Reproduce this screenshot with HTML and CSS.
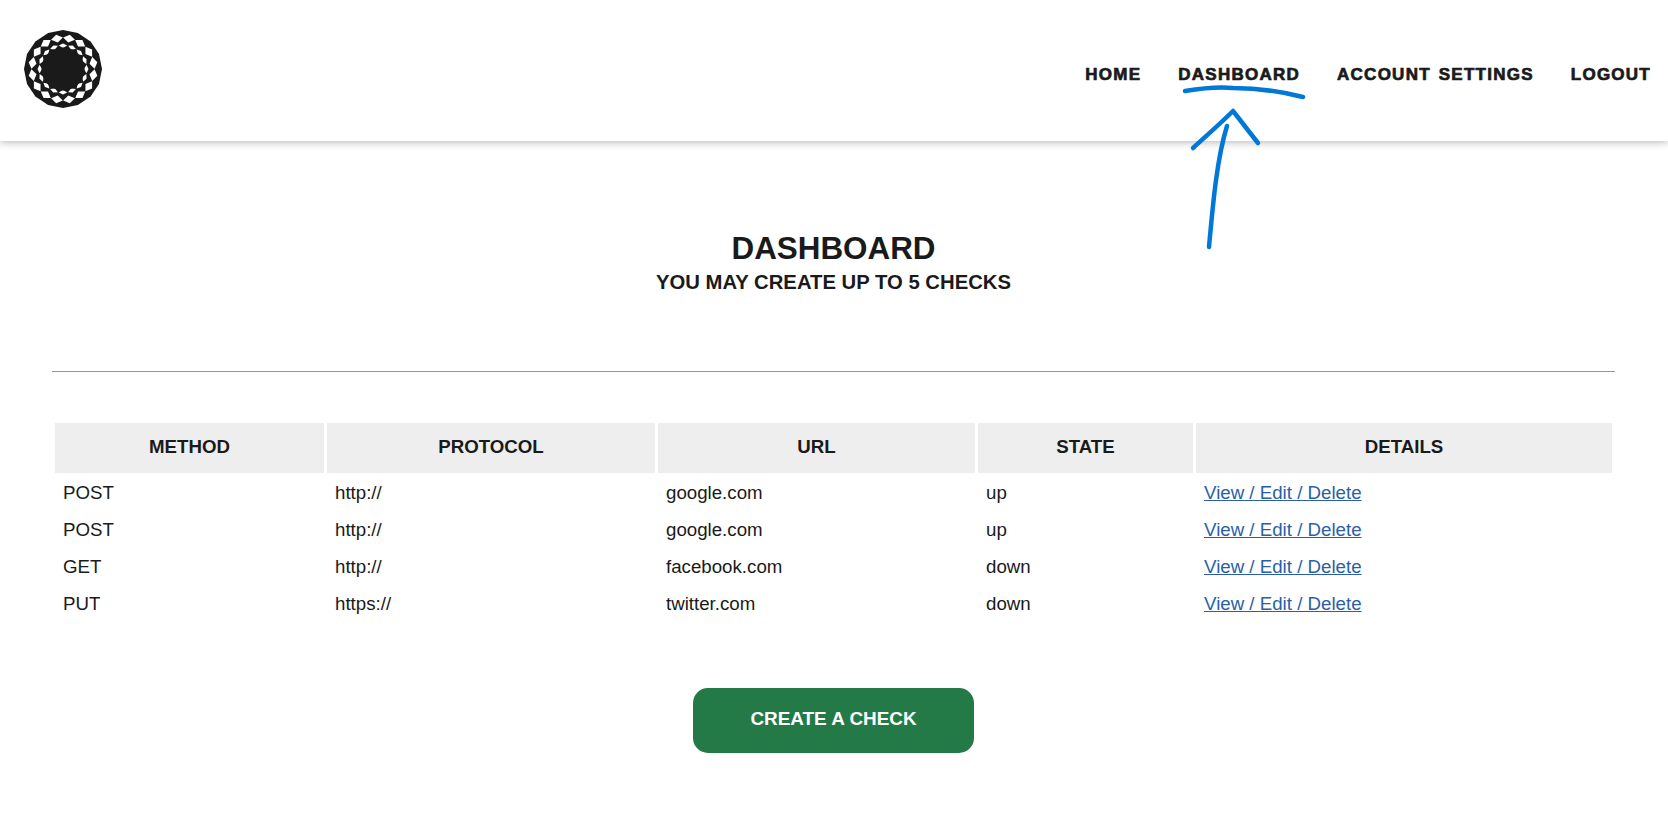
FILE: index.html
```html
<!DOCTYPE html>
<html lang="en">

<head>
  <meta charset="UTF-8">
  <meta name="viewport" content="width=device-width, initial-scale=1.0">
  <title>Dashboard</title>
  <link rel="stylesheet" href="styles.css">
</head>

<body>
  <header class="header">
    <a class="logo" href="#">
      <svg width="78" height="78" viewBox="-39 -39 78 78">
        <defs>
          <polygon id="outer" points="0,-35 6,-31 0,-27 -6,-31" fill="#fff" />
          <polygon id="inner" points="0,-25.5 4.2,-23.5 0,-21 -4.2,-23.5" fill="#fff" />
        </defs>
        <polygon fill="#1a1a1a" points="0,-39 14.9,-36 27.6,-27.6 36,-14.9 39,0 36,14.9 27.6,27.6 14.9,36 0,39 -14.9,36 -27.6,27.6 -36,14.9 -39,0 -36,-14.9 -27.6,-27.6 -14.9,-36" />
        <use href="#outer" transform="rotate(11.25)" />
        <use href="#outer" transform="rotate(33.75)" />
        <use href="#outer" transform="rotate(56.25)" />
        <use href="#outer" transform="rotate(78.75)" />
        <use href="#outer" transform="rotate(101.25)" />
        <use href="#outer" transform="rotate(123.75)" />
        <use href="#outer" transform="rotate(146.25)" />
        <use href="#outer" transform="rotate(168.75)" />
        <use href="#outer" transform="rotate(191.25)" />
        <use href="#outer" transform="rotate(213.75)" />
        <use href="#outer" transform="rotate(236.25)" />
        <use href="#outer" transform="rotate(258.75)" />
        <use href="#outer" transform="rotate(281.25)" />
        <use href="#outer" transform="rotate(303.75)" />
        <use href="#outer" transform="rotate(326.25)" />
        <use href="#outer" transform="rotate(348.75)" />
        <use href="#inner" transform="rotate(0)" />
        <use href="#inner" transform="rotate(22.5)" />
        <use href="#inner" transform="rotate(45)" />
        <use href="#inner" transform="rotate(67.5)" />
        <use href="#inner" transform="rotate(90)" />
        <use href="#inner" transform="rotate(112.5)" />
        <use href="#inner" transform="rotate(135)" />
        <use href="#inner" transform="rotate(157.5)" />
        <use href="#inner" transform="rotate(180)" />
        <use href="#inner" transform="rotate(202.5)" />
        <use href="#inner" transform="rotate(225)" />
        <use href="#inner" transform="rotate(247.5)" />
        <use href="#inner" transform="rotate(270)" />
        <use href="#inner" transform="rotate(292.5)" />
        <use href="#inner" transform="rotate(315)" />
        <use href="#inner" transform="rotate(337.5)" />
        <circle r="21.5" fill="#1a1a1a" />
      </svg>
    </a>
    <nav class="nav">
      <a href="#">Home</a>
      <a href="#">Dashboard</a>
      <a href="#">Account Settings</a>
      <a href="#">Logout</a>
    </nav>
  </header>

  <main class="content">
    <div class="heading">
      <h1>Dashboard</h1>
      <h2>You may create up to 5 checks</h2>
    </div>
    <hr class="divider">
    <table class="checks">
      <thead>
        <tr>
          <th class="col-method">Method</th>
          <th class="col-protocol">Protocol</th>
          <th class="col-url">URL</th>
          <th class="col-state">State</th>
          <th class="col-details">Details</th>
        </tr>
      </thead>
      <tbody>
        <tr>
          <td>POST</td>
          <td>http://</td>
          <td>google.com</td>
          <td>up</td>
          <td><a href="#">View / Edit / Delete</a></td>
        </tr>
        <tr>
          <td>POST</td>
          <td>http://</td>
          <td>google.com</td>
          <td>up</td>
          <td><a href="#">View / Edit / Delete</a></td>
        </tr>
        <tr>
          <td>GET</td>
          <td>http://</td>
          <td>facebook.com</td>
          <td>down</td>
          <td><a href="#">View / Edit / Delete</a></td>
        </tr>
        <tr>
          <td>PUT</td>
          <td>https://</td>
          <td>twitter.com</td>
          <td>down</td>
          <td><a href="#">View / Edit / Delete</a></td>
        </tr>
      </tbody>
    </table>
    <a class="create" href="#">Create a check</a>
  </main>

  <!-- hand drawn arrow on top of the page -->
  <svg class="scribble" width="130" height="170" viewBox="0 0 130 170">
    <path d="M7 8 C25 5 45 4 55 5 C80 5 105 9 125 14" />
    <path d="M15 65 C28 53 42 41 55 28 C63 38 72 50 80 60" />
    <path d="M49 43 C39 75 35 120 31 164" />
  </svg>
</body>

</html>
```

FILE: styles.css
```css
* {
  box-sizing: border-box;
}

body {
  margin: 0;
  padding: 0;
  background-color: #fff;
  color: #1a1a1a;
  font-family: "Liberation Sans", Arial, sans-serif;
}

.header {
  display: flex;
  align-items: center;
  justify-content: space-between;
  height: 141px;
  padding: 0 17px 4px 24px;
  box-shadow: 0 1px 8px rgba(0, 0, 0, 0.3);
}

.logo {
  display: flex;
}

.nav {
  display: flex;
  gap: 37px;
  padding-top: 12px;
}

.nav a {
  color: #1a1a1a;
  font-size: 17px;
  font-weight: bold;
  letter-spacing: 1.25px;
  word-spacing: 2px;
  text-decoration: none;
  text-transform: uppercase;
  -webkit-text-stroke: 0.7px #1a1a1a;
}

.content {
  display: flex;
  flex-direction: column;
  align-items: center;
  padding: 91px 53px 0 52px;
}

.heading {
  text-align: center;
}

.heading h1 {
  margin: 0;
  font-size: 31.4px;
  line-height: 34px;
  text-transform: uppercase;
}

.heading h2 {
  margin: 5px 0 0;
  font-size: 20.3px;
  line-height: 22px;
  text-transform: uppercase;
}

.divider {
  width: 100%;
  height: 1px;
  margin: 78px 0 0;
  border: 0;
  background-color: #999;
}

.checks {
  width: 100%;
  margin-top: 49px;
  border-spacing: 3px 2px;
  table-layout: fixed;
  font-size: 18.7px;
}

.checks th {
  height: 50px;
  padding: 0 8px 2px;
  background-color: #eee;
  font-size: 18.7px;
  text-transform: uppercase;
}

.checks td {
  height: 35px;
  padding: 0 8px;
  text-align: left;
}

.checks a {
  color: #2a5fa8;
}

.col-method {
  width: 269px;
}

.col-protocol {
  width: 328px;
}

.col-url {
  width: 317px;
}

.col-state {
  width: 215px;
}

.create {
  display: flex;
  align-items: center;
  justify-content: center;
  width: 281px;
  height: 65px;
  margin-top: 65px;
  padding-bottom: 3px;
  border-radius: 15px;
  background-color: #237a47;
  color: #fff;
  font-size: 18.9px;
  font-weight: bold;
  text-decoration: none;
  text-transform: uppercase;
}

.scribble {
  position: absolute;
  top: 83px;
  left: 1178px;
  fill: none;
  stroke: #0078d7;
  stroke-width: 4.5;
  stroke-linecap: round;
  stroke-linejoin: round;
}
```
